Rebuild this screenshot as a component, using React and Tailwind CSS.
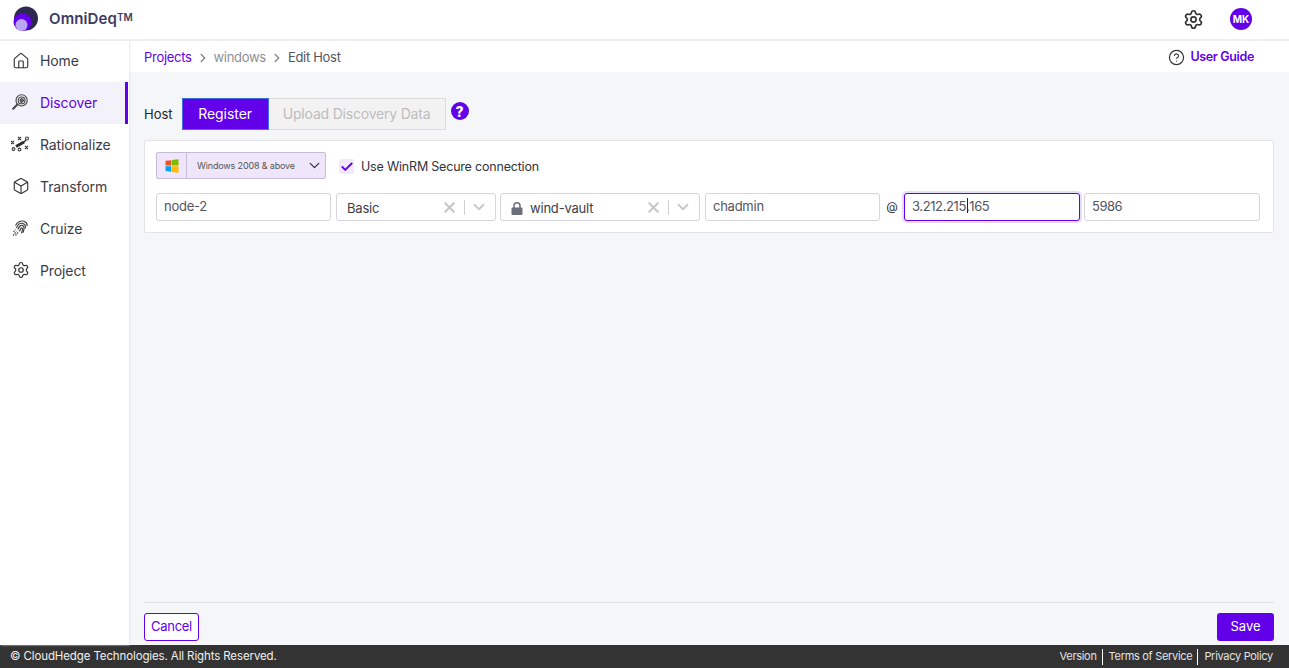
import React from "react";
import { Settings, House, Box, ChevronRight, ChevronDown, X, Check, CircleHelp } from "lucide-react";

function Logo() {
  return (
    <svg width="25" height="26" viewBox="0 0 25 26" className="shrink-0">
      <circle cx="13" cy="12.500" r="12" fill="#2e2a4f" />
      <circle cx="9.500" cy="16" r="9" fill="#6200ea" />
      <circle cx="8.500" cy="19" r="6" fill="#b9a6f5" />
    </svg>
  );
}

function DiscoverIcon() {
  return (
    <svg width="16" height="16" viewBox="0 0 16 16" fill="none" stroke="#444" strokeWidth="1.100">
      <circle cx="9.600" cy="6.400" r="5.600" />
      <circle cx="9.600" cy="6.400" r="3.400" />
      <path d="M8 8l3.400-3.400M9 9l3-3M7.600 6.500l2.400-2.400" />
      <path d="M5.400 10.400L1.200 14.800" strokeWidth="2" strokeLinecap="round" />
    </svg>
  );
}

function RationalizeIcon() {
  return (
    <svg width="20" height="16" viewBox="0 0 20 16" fill="none" stroke="#3a3a3a" strokeWidth="1.100" className="-ml-[2px]">
      <path d="M1 5l3 3M4 5L1 8M8 1l3 3M11 1L8 4M15 10l3 3M18 10l-3 3" />
      <circle cx="17" cy="2.500" r="1.500" />
      <circle cx="3.500" cy="13" r="1.400" />
      <circle cx="9.500" cy="13.500" r="1.400" />
      <path d="M6 10.500l8-4.500" stroke="#2b2b2b" strokeWidth="3" />
      <path d="M13 7l3-3" stroke="#2b2b2b" strokeWidth="1.300" />
    </svg>
  );
}

function CruizeIcon() {
  return (
    <svg width="16" height="16" viewBox="0 0 16 16" fill="none" stroke="#444" strokeWidth="1.200">
      <path d="M3.500 5.500C5 2 9 .3 12 1.300c2 .7 3.300 2.400 3.200 4.700" />
      <path d="M4.500 8C5.500 5 8 3 10.500 3.300 13 3.700 13.800 6 13.400 8.500" />
      <path d="M6 9.500c.7-2.400 2.200-4.300 4-4.100 1.800.2 2.300 2 1.900 4.300-.2 1.200-.6 2-1.100 3" />
      <path d="M7.600 11.500c.4-2 .9-3.800 2-3.700 1 .1 1 1.500.7 3-.2.900-.5 1.600-.9 2.400" />
      <path d="M1 15.500l3.500-4M3.500 15.500l2.500-3M1.500 12l2-2.500" strokeDasharray="1.500 1" />
    </svg>
  );
}

function WindowsIcon() {
  return (
    <svg width="14" height="14" viewBox="0 0 14 14" className="shrink-0">
      <path d="M0.500 1.800L6.300 1.200V6.500H0.500Z" fill="#f25022" />
      <path d="M7 1.100L13.500 0.300V6.500H7Z" fill="#7fba00" />
      <path d="M0.500 7.200H6.300V12.800L0.500 12.100Z" fill="#00a4ef" />
      <path d="M7 7.200H13.500V13.700L7 12.900Z" fill="#ffb900" />
    </svg>
  );
}

function LockGlyph() {
  return (
    <svg width="12" height="13" viewBox="0 0 12 13" className="shrink-0">
      <path d="M3 6V3.800a3 3 0 0 1 6 0V6" fill="none" stroke="#6c6f7c" strokeWidth="1.500" />
      <rect x="0.500" y="5.500" width="11" height="7.500" rx="1" fill="#6c6f7c" />
    </svg>
  );
}

function NavItem({ icon, label, active, first }) {
  return (
    <div
      className={`flex items-center pl-[12px] pb-[2px] text-[14px] tracking-[-0.1px] ${first ? "h-[41px]" : "h-[42px]"} ${
        active ? "bg-[#f3f2fb] text-[#6200ea] border-r-[3px] border-[#6200ea] mr-[1px]" : "text-[#3b3b47]"
      }`}
    >
      <span className="w-[28px] flex items-center">{icon}</span>
      <span>{label}</span>
    </div>
  );
}

function SelectBox({ width, icon, label }) {
  return (
    <div className={`${width} h-[28px] bg-white border border-[#d5d5de] rounded-[3px] flex items-center text-[13px] tracking-[-0.2px] text-[#3d3d47] shrink-0`}>
      <div className="flex-1 flex items-center pl-[10px] gap-[7px] min-w-0 pt-[3px]">
        {icon}
        <span>{label}</span>
      </div>
      <X size={17} strokeWidth={3} className="text-[#c8c8c8] mr-[6px]" />
      <span className="w-px h-[15px] bg-[#cfcfcf]" />
      <ChevronDown size={18} strokeWidth={2.400} className="text-[#c8c8c8] ml-[5px] mr-[7px]" />
    </div>
  );
}

function TextBox({ value, width, focus, tight }) {
  return (
    <div
      className={`${width} h-[28px] rounded-[3px] flex items-center text-[13px] text-[#54545e] pl-[7px] pb-[1px] shrink-0 ${
        focus
          ? "bg-white border border-[#6200ea] shadow-[0_0_0_2px_#e4dcf9] tracking-[-0.4px]"
          : tight
          ? "bg-white border border-[#d5d5de] tracking-[-0.5px]"
          : "bg-white border border-[#d5d5de] tracking-[-0.25px]"
      }`}
    >
      {focus ? (
        <>
          3.212.215
          <span className="relative">
            .
            <span className="absolute left-[1px] top-[1px] w-px h-[15px] bg-[#222]" />
          </span>
          165
        </>
      ) : (
        value
      )}
    </div>
  );
}

export default function App() {
  return (
    <div className="h-[668px] w-[1289px] overflow-hidden flex flex-col bg-white font-['Inter','Liberation_Sans',sans-serif]">
      <header className="h-[41px] shrink-0 border-b-2 border-[#eeeeee] bg-white flex items-center pl-[13px] pr-[37px] pb-[1px]">
        <Logo />
        <span className="ml-[11px] text-[15px] font-semibold text-[#3e3a63] tracking-[0.1px]">
          OmniDeq<span className="text-[10px] relative top-[-3px]">TM</span>
        </span>
        <div className="flex-1" />
        <Settings size={21} strokeWidth={1.900} className="text-[#333]" />
        <div className="ml-[26px] w-[22px] h-[22px] rounded-full bg-[#6200ea] text-white text-[10px] font-bold flex items-center justify-center">
          MK
        </div>
      </header>

      <div className="flex-1 flex min-h-0">
        <aside className="w-[129px] shrink-0 bg-white shadow-[1px_0_2px_#e6e6ea] relative">
          <NavItem first icon={<House size={18} strokeWidth={1.500} className="text-[#333]" />} label="Home" />
          <NavItem active icon={<DiscoverIcon />} label="Discover" />
          <NavItem icon={<RationalizeIcon />} label="Rationalize" />
          <NavItem icon={<Box size={18} strokeWidth={1.500} className="text-[#333]" />} label="Transform" />
          <NavItem icon={<CruizeIcon />} label="Cruize" />
          <NavItem icon={<Settings size={18} strokeWidth={1.600} className="text-[#333]" />} label="Project" />
        </aside>

        <main className="flex-1 min-w-0 bg-[#f5f6f8] flex flex-col">
          <div className="h-[31px] shrink-0 bg-white flex items-center pl-[15px] pr-[35px] text-[13px] tracking-[-0.3px] pt-[2px]">
            <span className="text-[#6200ea]">Projects</span>
            <ChevronRight size={14} strokeWidth={2.500} className="text-[#8a8a8a] mx-[4px]" />
            <span className="text-[#8f8f96]">windows</span>
            <ChevronRight size={14} strokeWidth={2.500} className="text-[#8a8a8a] mx-[4px]" />
            <span className="text-[#54545e]">Edit Host</span>
            <div className="flex-1" />
            <CircleHelp size={17} strokeWidth={1.700} className="text-[#333] mr-[5px]" />
            <span className="text-[#6200ea] font-semibold text-[12.5px] tracking-[-0.35px]">User Guide</span>
          </div>

          <div className="flex-1 min-h-0 flex flex-col px-[15px] pt-[27px]">
            <div className="flex items-start h-[41px] shrink-0 -mt-[1px] mb-[1px]">
              <span className="text-[13px] text-[#24242c] mr-[9px] h-[32px] flex items-center pt-[1px]">Host</span>
              <div className="h-[32px] w-[87px] bg-[#6200ea] border border-[#3d6fe0] text-white text-[14px] tracking-[-0.05px] flex items-center justify-center pb-[2px]">
                Register
              </div>
              <div className="h-[32px] w-[177px] bg-[#f2f2f2] border border-[#dcdcdc] border-l-0 text-[#bdbdbd] text-[14px] tracking-[-0.2px] flex items-center justify-center pb-[2px]">
                Upload Discovery Data
              </div>
              <div className="ml-[5px] mt-[4px] w-[18px] h-[18px] rounded-full bg-[#6200ea] text-white text-[14px] font-extrabold flex items-center justify-center">
                ?
              </div>
            </div>

            <section className="h-[93px] shrink-0 bg-white border border-[#e4e4e8] rounded-[2px] pl-[11px] pr-[13px] pt-[11px] flex flex-col">
              <div className="flex items-center h-[27px]">
                <div className="w-[170px] h-[27px] bg-[#efe6fb] border border-[#c4bcd6] rounded-[2px] flex items-center">
                  <span className="w-[30px] h-full border-r border-[#c4bcd6] flex items-center justify-center">
                    <WindowsIcon />
                  </span>
                  <span className="ml-[10px] text-[9px] tracking-[-0.15px] text-[#555] flex-1 whitespace-nowrap">Windows 2008 &amp; above</span>
                  <ChevronDown size={17} strokeWidth={1.800} className="text-[#333] mr-[2px]" />
                </div>
                <div className="ml-[13px] mt-[2px] w-[15px] h-[15px] rounded-[2px] bg-[#efe9fb] flex items-center justify-center">
                  <Check size={14} strokeWidth={3.200} className="text-[#6200ea]" />
                </div>
                <span className="ml-[7px] mt-[4px] text-[12.5px] tracking-[-0.2px] text-[#33333c]">Use WinRM Secure connection</span>
              </div>
              <div className="flex items-center mt-[14px]">
                <TextBox value="node-2" width="w-[175px]" />
                <div className="w-[5px] shrink-0" />
                <SelectBox width="w-[160px]" label="Basic" />
                <div className="w-[4px] shrink-0" />
                <SelectBox width="w-[200px]" label="wind-vault" icon={<LockGlyph />} />
                <div className="w-[5px] shrink-0" />
                <TextBox value="chadmin" width="w-[175px]" />
                <span className="w-[24px] shrink-0 text-center text-[12px] text-[#333]">@</span>
                <TextBox focus width="w-[176px]" />
                <div className="w-[4px] shrink-0" />
                <TextBox tight value="5986" width="w-[176px]" />
              </div>
            </section>

            <div className="flex-1" />

            <div className="h-[43px] shrink-0 border-t border-[#dfdfe4] flex items-start justify-between pt-[10px]">
              <button className="w-[55px] h-[28px] bg-white border border-[#6200ea] rounded-[3px] text-[#6200ea] text-[13px] tracking-[-0.3px]">
                Cancel
              </button>
              <button className="w-[57px] h-[28px] bg-[#6200ea] rounded-[3px] text-white text-[13px]">Save</button>
            </div>
          </div>
        </main>
      </div>

      <footer className="h-[23px] shrink-0 bg-[#333333] text-[#f0f0f0] flex items-center pl-[10px] pr-[16px] pt-[1px]">
        <span className="text-[11.5px] tracking-[-0.12px]">© CloudHedge Technologies. All Rights Reserved.</span>
        <div className="flex-1" />
        <div className="flex items-center text-[11px] tracking-[-0.3px] text-[#e4e4e4] -mt-[1px]">
          <span>Version</span>
          <span className="w-px h-[16px] bg-white ml-[5px] mr-[6px]" />
          <span>Terms of Service</span>
          <span className="w-px h-[16px] bg-white ml-[5px] mr-[6px]" />
          <span>Privacy Policy</span>
        </div>
      </footer>
    </div>
  );
}
